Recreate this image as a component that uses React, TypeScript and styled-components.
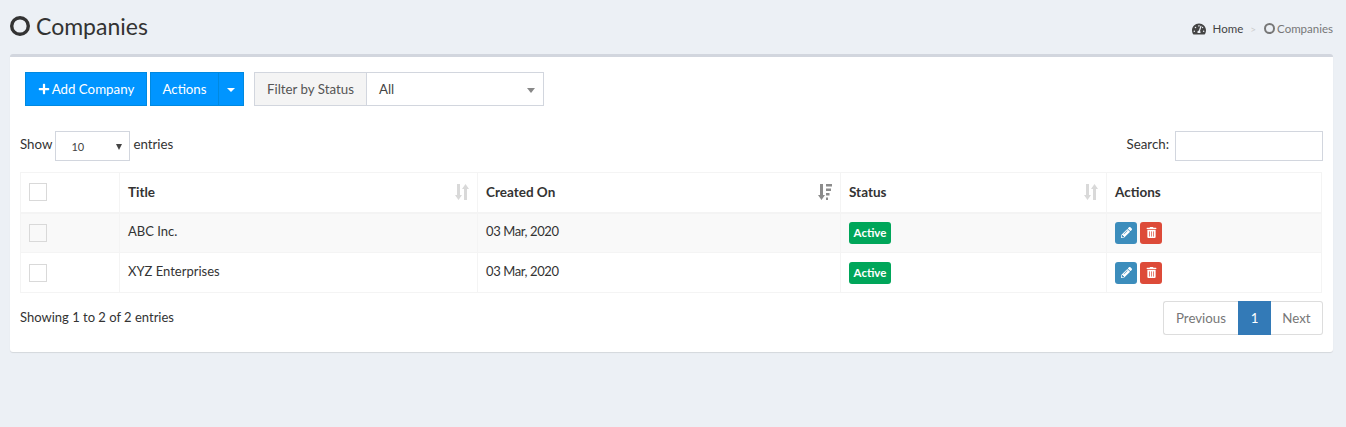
import React from 'react'
import styled, { createGlobalStyle } from 'styled-components'
import { FaPlus, FaPencilAlt, FaTrashAlt, FaTachometerAlt } from 'react-icons/fa'

const FONT = '"Lato", "Noto Sans", "Liberation Sans", sans-serif'

const GlobalStyle = createGlobalStyle`
  html, body {
    margin: 0;
    padding: 0;
    background: #ecf0f5;
    font-family: ${FONT};
    font-size: 14px;
    color: #333;
  }
  * { box-sizing: border-box; }
`

const rows = [
  { id: 1, title: 'ABC Inc.', created: '03 Mar, 2020', status: 'Active' },
  { id: 2, title: 'XYZ Enterprises', created: '03 Mar, 2020', status: 'Active' },
]

const Ring: React.FC<{ size: number; stroke: number; color: string }> = ({ size, stroke, color }) => (
  <svg width={size} height={size} viewBox={`0 0 ${size} ${size}`} style={{ flex: 'none' }}>
    <circle cx={size / 2} cy={size / 2} r={(size - stroke) / 2} fill='none' stroke={color} strokeWidth={stroke} />
  </svg>
)

const SortBoth = () => (
  <svg width='14' height='16' viewBox='0 0 14 16' fill='#d9d9d9'>
    <path d='M2 0h3v11h2l-3.5 5L0 11h2z' />
    <path d='M9 16h3V5h2L10.500 0 7 5h2z' />
  </svg>
)

const SortDesc = () => (
  <svg width='14' height='16' viewBox='0 0 14 16' fill='#8c8c8c'>
    <path d='M2 0h3v11h2l-3.500 5L0 11h2z' />
    <path d='M8 0h6v2.500H8zM8 4.500h5V7H8zM8 9h3.500v2.500H8zM8 13.500h2V16H8z' />
  </svg>
)

export default function App() {
  return (
    <>
      <GlobalStyle />
      <Page>
        <Header>
          <Title>
            <Ring size={20} stroke={3.4} color='#333' />
            Companies
          </Title>
          <Breadcrumb>
            <FaTachometerAlt size={14} color='#444' />
            <HomeLink>Home</HomeLink>
            <Separator>&gt;</Separator>
            <Ring size={11} stroke={2} color='#777' />
            <Current>Companies</Current>
          </Breadcrumb>
        </Header>
        <Card>
          <Toolbar>
            <PrimaryButton>
              <FaPlus size={12} />
              Add Company
            </PrimaryButton>
            <SplitGroup>
              <ActionsButton>Actions</ActionsButton>
              <CaretButton>
                <Caret />
              </CaretButton>
            </SplitGroup>
            <FilterGroup>
              <FilterLabel>Filter by Status</FilterLabel>
              <FilterSelect>
                All
                <SelectCaret />
              </FilterSelect>
            </FilterGroup>
          </Toolbar>
          <TableControls>
            <LengthControl>
              Show
              <LengthSelect>
                10
                <LengthCaret />
              </LengthSelect>
              entries
            </LengthControl>
            <SearchControl>
              Search:
              <SearchInput type='text' />
            </SearchControl>
          </TableControls>
          <DataTable>
            <colgroup>
              <col style={{ width: 99 }} />
              <col style={{ width: 358 }} />
              <col style={{ width: 363 }} />
              <col style={{ width: 266 }} />
              <col style={{ width: 215 }} />
            </colgroup>
            <thead>
              <tr>
                <HeadCell><Check /></HeadCell>
                <HeadCell><HeadInner>Title<SortBoth /></HeadInner></HeadCell>
                <HeadCell><HeadInner>Created On<SortDesc /></HeadInner></HeadCell>
                <HeadCell><HeadInner>Status<SortBoth /></HeadInner></HeadCell>
                <HeadCell>Actions</HeadCell>
              </tr>
            </thead>
            <tbody>
              {rows.map((row, i) => (
                <BodyRow key={row.id} $odd={i % 2 === 0}>
                  <BodyCell><Check /></BodyCell>
                  <BodyCell><CellText>{row.title}</CellText></BodyCell>
                  <BodyCell><DateText>{row.created}</DateText></BodyCell>
                  <BodyCell><StatusBadge>{row.status}</StatusBadge></BodyCell>
                  <BodyCell>
                    <RowActions>
                      <IconButton $bg='#3c8dbc'><FaPencilAlt size={11} /></IconButton>
                      <IconButton $bg='#dd4b39'><FaTrashAlt size={11} /></IconButton>
                    </RowActions>
                  </BodyCell>
                </BodyRow>
              ))}
            </tbody>
          </DataTable>
          <TableFooter>
            <Info>Showing 1 to 2 of 2 entries</Info>
            <Pagination>
              <PageItem $w={75} $first>Previous</PageItem>
              <ActivePage>1</ActivePage>
              <PageItem $w={52} $last>Next</PageItem>
            </Pagination>
          </TableFooter>
        </Card>
      </Page>
    </>
  )
}

const Page = styled.div`
  width: 1346px;
  height: 427px;
  padding: 0 13px 0 10px;
  overflow: hidden;
`

const Header = styled.header`
  display: flex;
  justify-content: space-between;
  align-items: center;
  height: 54px;
`

const Title = styled.h1`
  display: flex;
  align-items: center;
  gap: 6px;
  margin: 0;
  padding-bottom: 2px;
  font-size: 23px;
  font-weight: 400;
  color: #333;
`

const Breadcrumb = styled.nav`
  display: flex;
  align-items: center;
  font-size: 12px;
  margin-top: 3px;
`

const HomeLink = styled.span`
  margin-left: 7px;
  color: #444;
  font-size: 11.500px;
`

const Separator = styled.span`
  margin: 0 8px 0 7px;
  color: #ccc;
  font-size: 10px;
`

const Current = styled.span`
  margin-left: 2px;
  color: #777;
  font-size: 11.500px;
`

const Card = styled.section`
  height: 298px;
  padding: 15px 10px 0;
  background: #fff;
  border-top: 3px solid #d2d6de;
  border-radius: 3px;
  box-shadow: 0 1px 1px rgba(0, 0, 0, 0.1);
`

const Toolbar = styled.div`
  display: flex;
  padding-left: 5px;
  height: 34px;
`

const BlueButton = styled.button`
  display: flex;
  align-items: center;
  height: 34px;
  border: 1px solid #0089e0;
  background: #0095ff;
  color: #fff;
  font-family: ${FONT};
  font-size: 13.300px;
  padding: 0;
`

const PrimaryButton = styled(BlueButton)`
  width: 122px;
  justify-content: center;
  gap: 2px;
`

const SplitGroup = styled.div`
  display: flex;
  margin-left: 3px;
`

const ActionsButton = styled(BlueButton)`
  width: 69px;
  justify-content: center;
`

const CaretButton = styled(BlueButton)`
  width: 25px;
  justify-content: center;
  border-left: 0;
`

const Caret = styled.span`
  width: 0;
  height: 0;
  border-left: 4px solid transparent;
  border-right: 4px solid transparent;
  border-top: 4px solid #fff;
  margin-top: 2px;
`

const FilterGroup = styled.div`
  display: flex;
  margin-left: 10px;
`

const FilterLabel = styled.div`
  display: flex;
  align-items: center;
  justify-content: center;
  width: 112px;
  height: 34px;
  border: 1px solid #d2d6de;
  border-right: 0;
  background: #f4f4f4;
  color: #555;
  font-size: 13.300px;
`

const FilterSelect = styled.div`
  position: relative;
  display: flex;
  align-items: center;
  width: 178px;
  height: 34px;
  padding-left: 12px;
  border: 1px solid #d2d6de;
  color: #444;
  font-size: 13.300px;
`

const SelectCaret = styled.span`
  position: absolute;
  right: 8px;
  top: 15px;
  border-left: 4px solid transparent;
  border-right: 4px solid transparent;
  border-top: 5px solid #888;
`

const TableControls = styled.div`
  display: flex;
  justify-content: space-between;
  align-items: flex-start;
  height: 30px;
  margin-top: 25px;
  font-size: 13.300px;
  line-height: 26px;
  color: #333;
`

const LengthControl = styled.label`
  display: flex;
  align-items: flex-start;
  gap: 3px;
`

const LengthSelect = styled.div`
  position: relative;
  display: flex;
  align-items: center;
  width: 75px;
  height: 30px;
  padding: 2px 0 0 15px;
  border: 1px solid #d2d6de;
  font-size: 11px;
  color: #444;
`

const LengthCaret = styled.span`
  position: absolute;
  right: 7px;
  top: 12px;
  border-left: 3.500px solid transparent;
  border-right: 3.500px solid transparent;
  border-top: 6px solid #444;
`

const SearchControl = styled.label`
  display: flex;
  align-items: flex-start;
  gap: 6px;
`

const SearchInput = styled.input`
  width: 148px;
  height: 30px;
  border: 1px solid #d2d6de;
  outline: none;
  background: #fff;
`

const DataTable = styled.table`
  width: 1301px;
  margin-top: 11px;
  border-collapse: collapse;
  table-layout: fixed;
  font-size: 13px;
`

const HeadCell = styled.th`
  height: 40px;
  padding: 0 8px;
  text-align: left;
  font-size: 13.500px;
  font-weight: 700;
  color: #333;
  border: 1px solid #f4f4f4;
  border-bottom-width: 2px;
`

const HeadInner = styled.div`
  display: flex;
  justify-content: space-between;
  align-items: center;
`

const BodyRow = styled.tr<{ $odd: boolean }>`
  background: ${(p) => (p.$odd ? '#f9f9f9' : '#fff')};
`

const BodyCell = styled.td`
  height: 40px;
  padding: 0 8px;
  border: 1px solid #f4f4f4;
  color: #333;
`

const CellText = styled.span`
  position: relative;
  top: -2px;
`

const DateText = styled(CellText)`
  letter-spacing: -0.4px;
`

const Check = styled.div`
  width: 18px;
  height: 18px;
  border: 1px solid #d9d9d9;
  background: transparent;
`

const StatusBadge = styled.span`
  display: inline-flex;
  align-items: center;
  justify-content: center;
  width: 42px;
  height: 22px;
  border-radius: 3px;
  background: #00a65a;
  color: #fff;
  font-size: 11.500px;
  font-weight: 700;
  vertical-align: middle;
`

const RowActions = styled.div`
  display: flex;
  gap: 3px;
`

const IconButton = styled.button<{ $bg: string }>`
  display: flex;
  align-items: center;
  justify-content: center;
  width: 22px;
  height: 22px;
  padding: 0;
  border: 0;
  border-radius: 3px;
  background: ${(p) => p.$bg};
  color: #fff;
`

const TableFooter = styled.div`
  display: flex;
  justify-content: space-between;
  align-items: flex-start;
  margin-top: 8px;
`

const Info = styled.div`
  margin-top: 8px;
  font-size: 13px;
  color: #333;
`

const Pagination = styled.div`
  display: flex;
  height: 34px;
`

const PageItem = styled.div<{ $w: number; $first?: boolean; $last?: boolean }>`
  display: flex;
  align-items: center;
  justify-content: center;
  width: ${(p) => p.$w}px;
  border: 1px solid #ddd;
  border-left-width: ${(p) => (p.$last ? 0 : 1)}px;
  border-right-width: ${(p) => (p.$first ? 0 : 1)}px;
  border-radius: ${(p) => (p.$first ? '3px 0 0 3px' : p.$last ? '0 3px 3px 0' : '0')};
  color: #777;
  font-size: 13.300px;
  background: #fff;
`

const ActivePage = styled.div`
  display: flex;
  align-items: center;
  justify-content: center;
  width: 33px;
  background: #337ab7;
  color: #fff;
  font-size: 13.300px;
`
